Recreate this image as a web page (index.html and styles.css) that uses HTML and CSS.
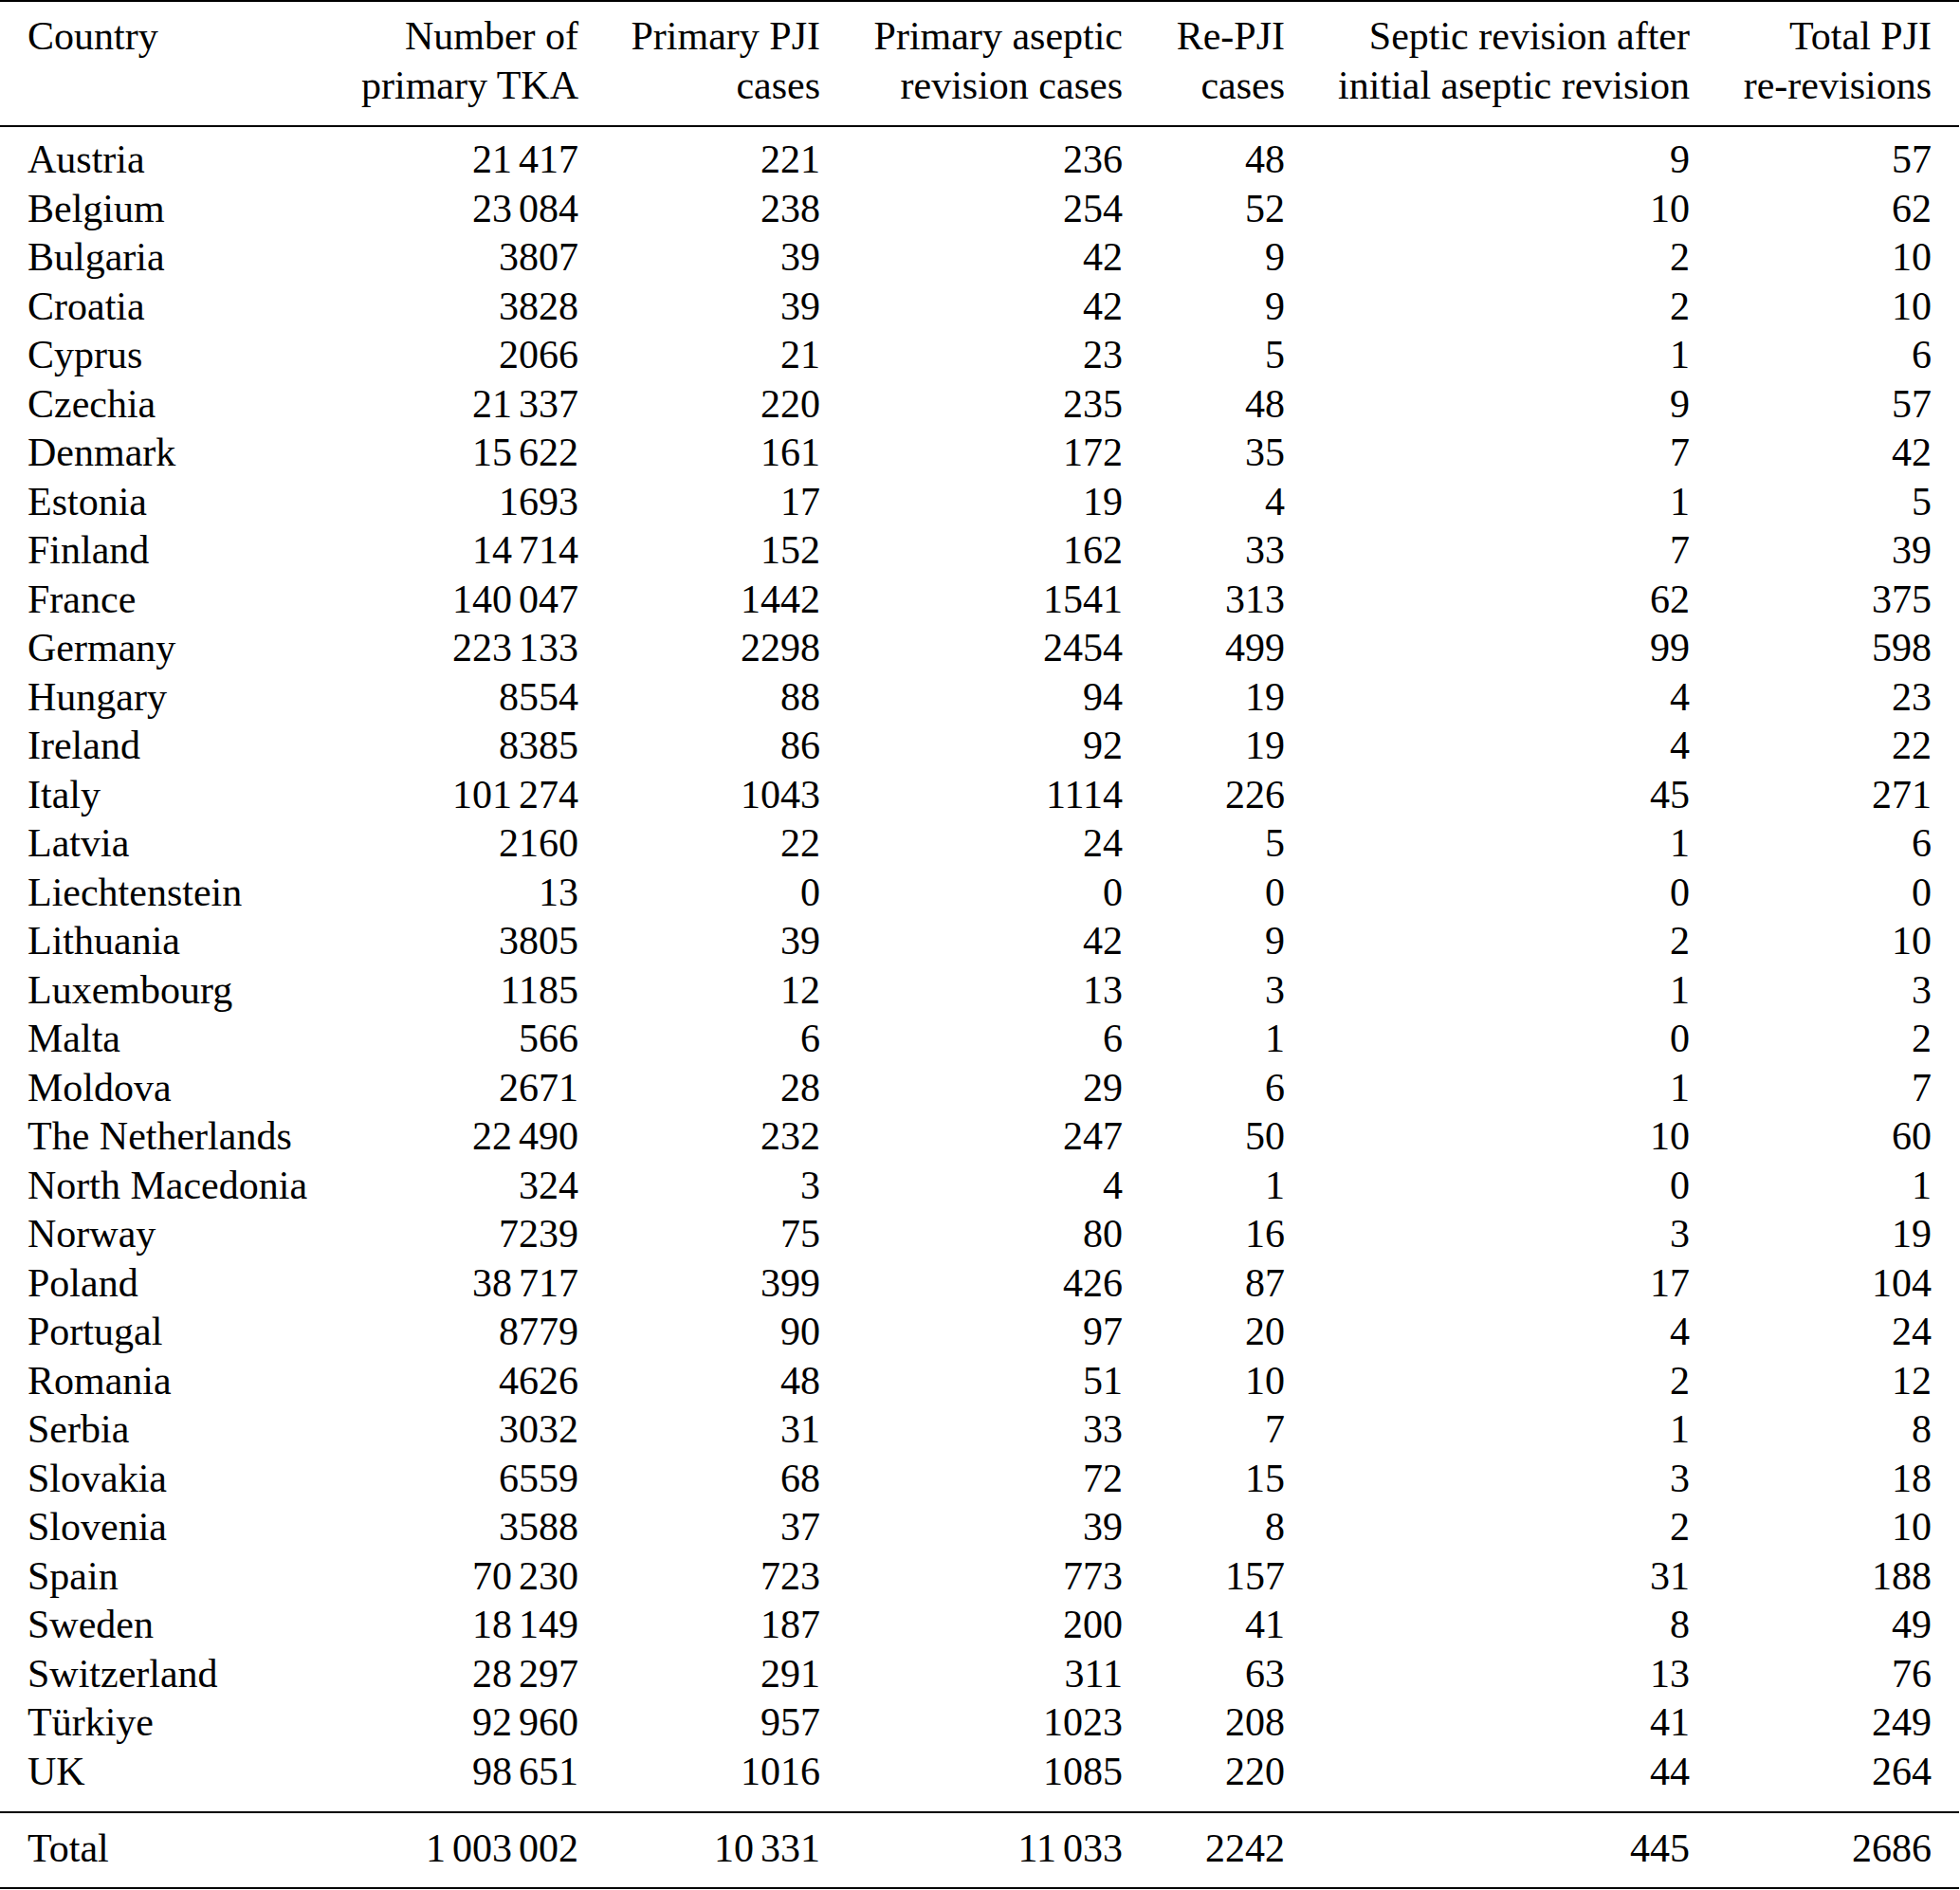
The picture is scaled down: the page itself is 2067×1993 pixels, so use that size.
FILE: index.html
```html
<!DOCTYPE html>
<html lang="en">
<head>
<meta charset="utf-8">
<title>PJI re-revisions by country</title>
<link rel="stylesheet" href="styles.css">
</head>
<body>
<table class="data">
  <thead>
    <tr>
      <th class="c1">Country</th>
      <th class="c2">Number of<br>primary TKA</th>
      <th class="c3">Primary PJI<br>cases</th>
      <th class="c4">Primary aseptic<br>revision cases</th>
      <th class="c5">Re-PJI<br>cases</th>
      <th class="c6">Septic revision after<br>initial aseptic revision</th>
      <th class="c7">Total PJI<br>re-revisions</th>
    </tr>
  </thead>
  <tbody>
    <tr><td>Austria</td><td>21&#8198;417</td><td>221</td><td>236</td><td>48</td><td>9</td><td>57</td></tr>
    <tr><td>Belgium</td><td>23&#8198;084</td><td>238</td><td>254</td><td>52</td><td>10</td><td>62</td></tr>
    <tr><td>Bulgaria</td><td>3807</td><td>39</td><td>42</td><td>9</td><td>2</td><td>10</td></tr>
    <tr><td>Croatia</td><td>3828</td><td>39</td><td>42</td><td>9</td><td>2</td><td>10</td></tr>
    <tr><td>Cyprus</td><td>2066</td><td>21</td><td>23</td><td>5</td><td>1</td><td>6</td></tr>
    <tr><td>Czechia</td><td>21&#8198;337</td><td>220</td><td>235</td><td>48</td><td>9</td><td>57</td></tr>
    <tr><td>Denmark</td><td>15&#8198;622</td><td>161</td><td>172</td><td>35</td><td>7</td><td>42</td></tr>
    <tr><td>Estonia</td><td>1693</td><td>17</td><td>19</td><td>4</td><td>1</td><td>5</td></tr>
    <tr><td>Finland</td><td>14&#8198;714</td><td>152</td><td>162</td><td>33</td><td>7</td><td>39</td></tr>
    <tr><td>France</td><td>140&#8198;047</td><td>1442</td><td>1541</td><td>313</td><td>62</td><td>375</td></tr>
    <tr><td>Germany</td><td>223&#8198;133</td><td>2298</td><td>2454</td><td>499</td><td>99</td><td>598</td></tr>
    <tr><td>Hungary</td><td>8554</td><td>88</td><td>94</td><td>19</td><td>4</td><td>23</td></tr>
    <tr><td>Ireland</td><td>8385</td><td>86</td><td>92</td><td>19</td><td>4</td><td>22</td></tr>
    <tr><td>Italy</td><td>101&#8198;274</td><td>1043</td><td>1114</td><td>226</td><td>45</td><td>271</td></tr>
    <tr><td>Latvia</td><td>2160</td><td>22</td><td>24</td><td>5</td><td>1</td><td>6</td></tr>
    <tr><td>Liechtenstein</td><td>13</td><td>0</td><td>0</td><td>0</td><td>0</td><td>0</td></tr>
    <tr><td>Lithuania</td><td>3805</td><td>39</td><td>42</td><td>9</td><td>2</td><td>10</td></tr>
    <tr><td>Luxembourg</td><td>1185</td><td>12</td><td>13</td><td>3</td><td>1</td><td>3</td></tr>
    <tr><td>Malta</td><td>566</td><td>6</td><td>6</td><td>1</td><td>0</td><td>2</td></tr>
    <tr><td>Moldova</td><td>2671</td><td>28</td><td>29</td><td>6</td><td>1</td><td>7</td></tr>
    <tr><td>The Netherlands</td><td>22&#8198;490</td><td>232</td><td>247</td><td>50</td><td>10</td><td>60</td></tr>
    <tr><td>North Macedonia</td><td>324</td><td>3</td><td>4</td><td>1</td><td>0</td><td>1</td></tr>
    <tr><td>Norway</td><td>7239</td><td>75</td><td>80</td><td>16</td><td>3</td><td>19</td></tr>
    <tr><td>Poland</td><td>38&#8198;717</td><td>399</td><td>426</td><td>87</td><td>17</td><td>104</td></tr>
    <tr><td>Portugal</td><td>8779</td><td>90</td><td>97</td><td>20</td><td>4</td><td>24</td></tr>
    <tr><td>Romania</td><td>4626</td><td>48</td><td>51</td><td>10</td><td>2</td><td>12</td></tr>
    <tr><td>Serbia</td><td>3032</td><td>31</td><td>33</td><td>7</td><td>1</td><td>8</td></tr>
    <tr><td>Slovakia</td><td>6559</td><td>68</td><td>72</td><td>15</td><td>3</td><td>18</td></tr>
    <tr><td>Slovenia</td><td>3588</td><td>37</td><td>39</td><td>8</td><td>2</td><td>10</td></tr>
    <tr><td>Spain</td><td>70&#8198;230</td><td>723</td><td>773</td><td>157</td><td>31</td><td>188</td></tr>
    <tr><td>Sweden</td><td>18&#8198;149</td><td>187</td><td>200</td><td>41</td><td>8</td><td>49</td></tr>
    <tr><td>Switzerland</td><td>28&#8198;297</td><td>291</td><td>311</td><td>63</td><td>13</td><td>76</td></tr>
    <tr><td>Türkiye</td><td>92&#8198;960</td><td>957</td><td>1023</td><td>208</td><td>41</td><td>249</td></tr>
    <tr><td>UK</td><td>98&#8198;651</td><td>1016</td><td>1085</td><td>220</td><td>44</td><td>264</td></tr>
  </tbody>
  <tfoot>
    <tr><td>Total</td><td>1&#8198;003&#8198;002</td><td>10&#8198;331</td><td>11&#8198;033</td><td>2242</td><td>445</td><td>2686</td></tr>
  </tfoot>
</table>
</body>
</html>
```
FILE: styles.css
```css
html, body {
  margin: 0;
  padding: 0;
  background: #ffffff;
}

body {
  font-family: "Liberation Serif", "Times New Roman", serif;
  font-size: 42px;
  color: #000000;
}

.data {
  table-layout: fixed;
  border-collapse: separate;
  border-spacing: 0;
  width: 2066px;
}

.data th,
.data td {
  padding: 0 29px 0 0;
  text-align: right;
  white-space: nowrap;
  font-weight: normal;
  vertical-align: top;
}

.data th:first-child,
.data td:first-child {
  padding-left: 29px;
  padding-right: 0;
  text-align: left;
}

/* column widths (content box) */
.c1 { width: 323px; }
.c2 { width: 258px; }
.c3 { width: 226px; }
.c4 { width: 290px; }
.c5 { width: 142px; }
.c6 { width: 398px; }
.c7 { width: 226px; }

/* header */
.data thead th {
  line-height: 51.5px;
  padding-top: 11px;
  padding-bottom: 16px;
  border-top: 2px solid #000;
  border-bottom: 2px solid #000;
}

/* body rows */
.data tbody td {
  line-height: 51.5px;
}

.data tbody tr:first-child td {
  padding-top: 9px;
}

.data tbody tr:last-child td {
  padding-bottom: 16px;
}

/* total row */
.data tfoot td {
  line-height: 51.5px;
  padding-top: 12px;
  padding-bottom: 14px;
  border-top: 2px solid #000;
  border-bottom: 2px solid #000;
}
```
